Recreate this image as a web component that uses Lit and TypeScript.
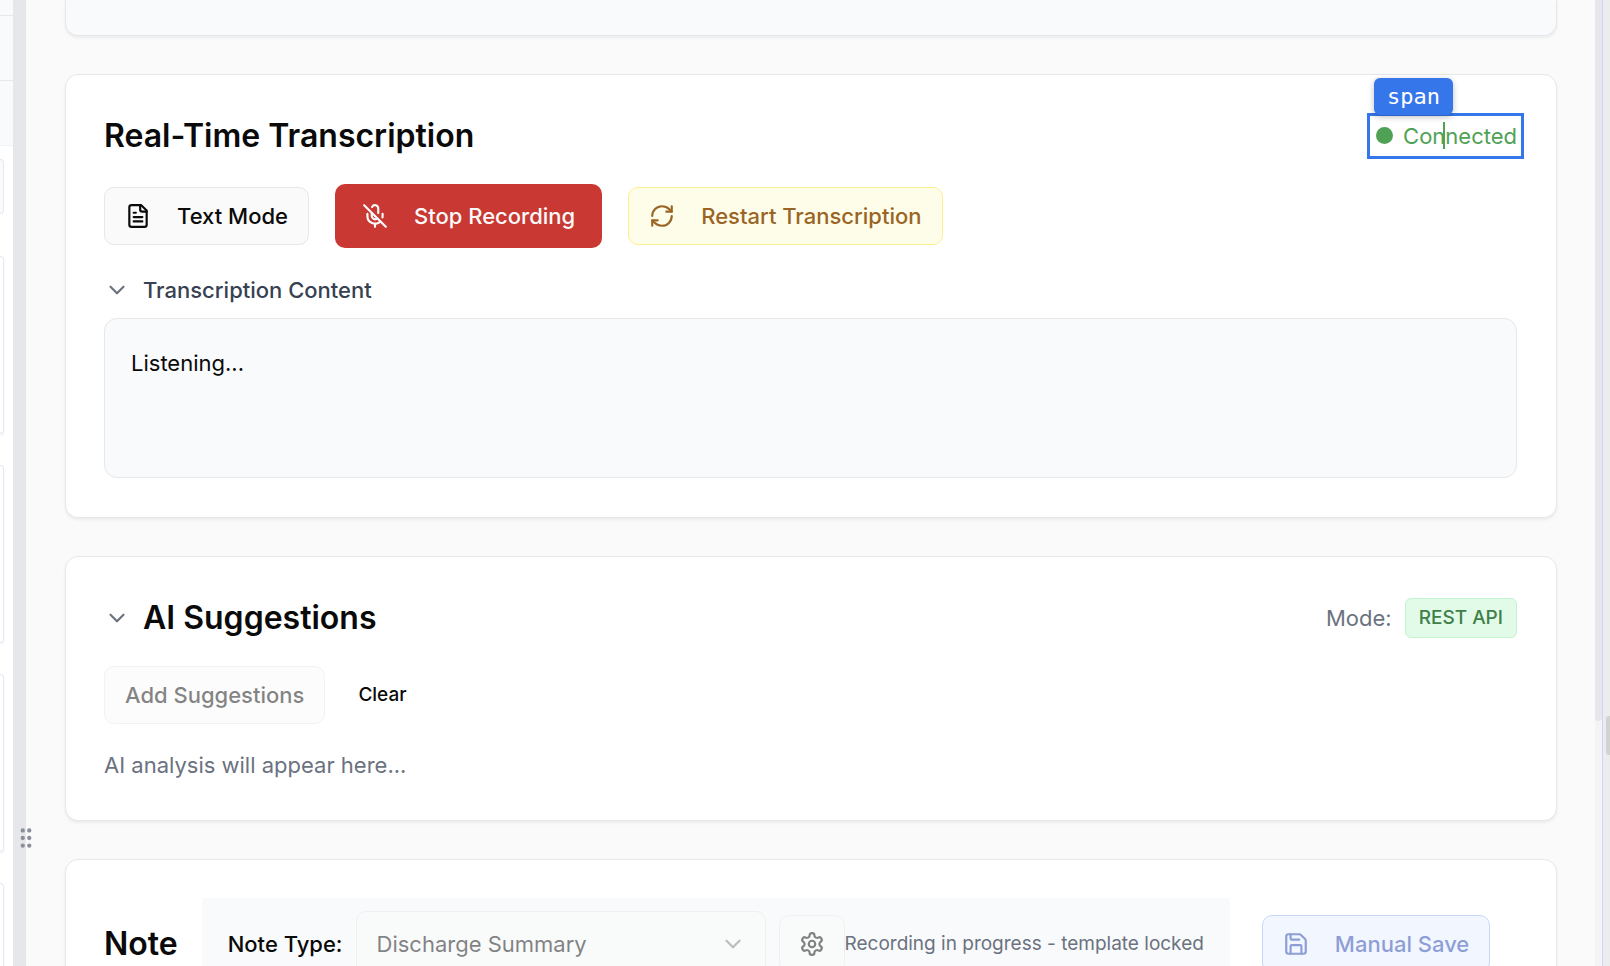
import { LitElement, html, css, svg } from "lit";
import { customElement } from "lit/decorators.js";

const glyph = (body: unknown, cls = "icon") => html`<svg class=${cls} viewBox="0 0 24 24" aria-hidden="true">${body}</svg>`;

const fileText = svg`<path d="M15 2H6a2 2 0 0 0-2 2v16a2 2 0 0 0 2 2h12a2 2 0 0 0 2-2V7Z"/><path d="M14 2v4a2 2 0 0 0 2 2h4"/><path d="M10 9H8"/><path d="M16 13H8"/><path d="M16 17H8"/>`;
const micOff = svg`<line x1="2" x2="22" y1="2" y2="22"/><path d="M18.89 13.23A7.12 7.12 0 0 0 19 12v-2"/><path d="M5 10v2a7 7 0 0 0 12 5"/><path d="M15 9.34V5a3 3 0 0 0-5.68-1.33"/><path d="M9 9v3a3 3 0 0 0 5.12 2.12"/><line x1="12" x2="12" y1="19" y2="22"/>`;
const refresh = svg`<path d="M3 12a9 9 0 0 1 9-9 9.75 9.75 0 0 1 6.74 2.74L21 8"/><path d="M21 3v5h-5"/><path d="M21 12a9 9 0 0 1-9 9 9.75 9.75 0 0 1-6.74-2.74L3 16"/><path d="M8 16H3v5"/>`;
const chevron = svg`<path d="m6 9 6 6 6-6"/>`;
const save = svg`<path d="M15.2 3a2 2 0 0 1 1.4.6l3.8 3.8a2 2 0 0 1 .6 1.4V19a2 2 0 0 1-2 2H5a2 2 0 0 1-2-2V5a2 2 0 0 1 2-2z"/><path d="M17 21v-7a1 1 0 0 0-1-1H8a1 1 0 0 0-1 1v7"/><path d="M7 3v4a1 1 0 0 0 1 1h7"/>`;
const gear = svg`<path d="M12.22 2h-.44a2 2 0 0 0-2 2v.18a2 2 0 0 1-1 1.73l-.43.25a2 2 0 0 1-2 0l-.15-.08a2 2 0 0 0-2.73.73l-.22.38a2 2 0 0 0 .73 2.73l.15.1a2 2 0 0 1 1 1.72v.51a2 2 0 0 1-1 1.74l-.15.09a2 2 0 0 0-.73 2.73l.22.38a2 2 0 0 0 2.73.73l.15-.08a2 2 0 0 1 2 0l.43.25a2 2 0 0 1 1 1.73V20a2 2 0 0 0 2 2h.44a2 2 0 0 0 2-2v-.18a2 2 0 0 1 1-1.73l.43-.25a2 2 0 0 1 2 0l.15.08a2 2 0 0 0 2.73-.73l.22-.39a2 2 0 0 0-.73-2.73l-.15-.08a2 2 0 0 1-1-1.74v-.5a2 2 0 0 1 1-1.74l.15-.09a2 2 0 0 0 .73-2.73l-.22-.38a2 2 0 0 0-2.73-.73l-.15.08a2 2 0 0 1-2 0l-.43-.25a2 2 0 0 1-1-1.73V4a2 2 0 0 0-2-2z"/><circle cx="12" cy="12" r="3"/>`;
const grip = svg`<circle cx="9" cy="12" r="1"/><circle cx="9" cy="5" r="1"/><circle cx="9" cy="19" r="1"/><circle cx="15" cy="12" r="1"/><circle cx="15" cy="5" r="1"/><circle cx="15" cy="19" r="1"/>`;

@customElement("app-root")
export class AppRoot extends LitElement {
  static styles = css`
    :host {
      display: block;
      font-family: Inter, "Liberation Sans", sans-serif;
      font-size: 22px;
      line-height: 32px;
      color: #0a0a0a;
    }
    * { box-sizing: border-box; }
    button, select { font: inherit; color: inherit; margin: 0; }
    h2, p { margin: 0; }
    .icon {
      display: block;
      flex: none;
      width: 26px;
      height: 26px;
      fill: none;
      stroke: currentColor;
      stroke-width: 2;
      stroke-linecap: round;
      stroke-linejoin: round;
    }
    .app {
      display: grid;
      grid-template-columns: 13px 13px minmax(0, 1fr) 7px 8px;
      height: 100vh;
      overflow: hidden;
      background: #fafafa;
    }
    .side {
      display: flex;
      flex-direction: column;
      overflow: hidden;
      background: #fff;
    }
    .cell {
      flex: none;
      height: 65px;
      background: #f9fafb;
      border-bottom: 1px solid #e5e7eb;
    }
    .cell.first { height: 16px; }
    .cell.last { border-color: #f1f2f4; }
    .field, .item {
      flex: none;
      width: 4px;
      border: 1px solid #e5e7eb;
      border-left: 0;
    }
    .field {
      height: 55px;
      margin: 13px 0 42px;
      background: #fafafa;
      border-radius: 0 10px 10px 0;
    }
    .item {
      height: 178px;
      margin-bottom: 31px;
      background: #fff;
      border-radius: 0 13px 13px 0;
      box-shadow: 0 2px 3px rgba(0, 0, 0, 0.05);
    }
    .divider {
      display: flex;
      align-items: flex-end;
      padding: 0 0 115px;
      background: #e5e7eb;
      color: #8b8f9b;
      z-index: 1;
    }
    .main {
      display: flex;
      flex-direction: column;
      gap: 38px;
      padding: 0 38px 0 39px;
      overflow: hidden;
    }
    .card {
      flex: none;
      padding: 38px 39px 39px 38px;
      background: #fff;
      border: 1px solid #e5e7eb;
      border-radius: 13px;
      box-shadow: 0 2px 3px rgba(0, 0, 0, 0.06);
    }
    .card.previous {
      height: 36px;
      padding: 0;
      background: #f9fafb;
      border-top: 0;
      border-radius: 0 0 13px 13px;
    }
    .head {
      display: flex;
      align-items: center;
      justify-content: space-between;
      height: 45px;
    }
    .title {
      font-size: 32px;
      line-height: 44px;
      font-weight: 600;
    }
    .fold {
      display: flex;
      align-items: center;
      gap: 13px;
      padding: 0;
      border: 0;
      background: none;
      color: #374151;
      font-weight: 500;
    }
    .fold .icon { color: #6b7280; }
    .fold .title { color: #0a0a0a; }
    .row { display: flex; align-items: center; }
    .tools { gap: 26px; margin: 26px 0; }
    .btn {
      display: flex;
      align-items: center;
      justify-content: center;
      gap: 26px;
      height: 58px;
      padding: 0 20px;
      border: 1px solid #e5e7eb;
      border-radius: 10px;
      background: #fafafa;
      font-weight: 500;
      white-space: nowrap;
    }
    .btn.stop {
      height: 64px;
      padding: 0 27px;
      border: 0;
      background: #c93832;
      color: #fafafa;
    }
    .btn.restart { background: #fefdea; border-color: #fdef8e; color: #9a6524; }
    .btn.save { margin-left: 8px; background: #e5efff; border-color: #93b3f7; color: #1e40af; }
    .btn:disabled { opacity: 0.5; }
    .btn.square { width: 66px; padding: 0; }
    .btn.plain {
      border: 0;
      background: none;
      font-size: 19px;
    }
    .transcript {
      height: 160px;
      margin-top: 12px;
      padding: 28px 26px;
      background: #f9fafb;
      border: 1px solid #e5e7eb;
      border-radius: 13px;
    }
    .status {
      position: relative;
      display: flex;
      align-items: center;
      gap: 10px;
      color: #4fa255;
    }
    .dot {
      width: 17px;
      height: 17px;
      border-radius: 50%;
      background: #4fa255;
    }
    .inspect {
      position: absolute;
      inset: -7px -7px -7px -9px;
      border: 3px solid #3577ea;
    }
    .tag {
      position: absolute;
      left: -2px;
      bottom: 37px;
      height: 37px;
      padding: 0 13px;
      border-radius: 6px;
      background: #3577ea;
      box-shadow: 0 2px 6px rgba(0, 0, 0, 0.25);
      color: #fff;
      font: 22px/37px "DejaVu Sans Mono", monospace;
    }
    .caret {
      position: absolute;
      left: 67px;
      top: 2px;
      width: 2px;
      height: 27px;
      background: #4fa255;
    }
    .mode { gap: 13px; color: #6b7280; }
    .chip {
      height: 40px;
      padding: 0 13px;
      border: 1px solid #c3f5d1;
      border-radius: 6px;
      background: #e2fae8;
      color: #3f8049;
      font-size: 19px;
      line-height: 38px;
      font-weight: 500;
    }
    .actions { gap: 13px; margin: 26px 0 25px; }
    .muted { color: #6b7280; }
    .note { gap: 24px; }
    .panel {
      display: flex;
      align-items: center;
      padding: 13px 26px;
      background: #f9fafb;
    }
    .panel label { font-weight: 500; margin-right: 13px; white-space: nowrap; }
    .pick {
      display: grid;
      align-items: center;
      width: 410px;
      margin-right: 13px;
      opacity: 0.5;
    }
    .pick select {
      grid-area: 1 / 1;
      width: 100%;
      height: 65px;
      padding: 0 20px;
      appearance: none;
      border: 1px solid #e5e7eb;
      border-radius: 10px;
      background: #fafafa;
      opacity: 1;
    }
    .pick .icon {
      grid-area: 1 / 1;
      justify-self: end;
      margin-right: 20px;
      opacity: 0.5;
      pointer-events: none;
    }
    .small { font-size: 19px; white-space: nowrap; }
    .track { background: #f3f4f6; }
    .thumb { height: 721px; background: #e5e7eb; border-radius: 0 0 4px 4px; }
    .rail {
      display: flex;
      justify-content: flex-end;
      align-items: flex-start;
      padding-top: 716px;
      border-left: 1px solid #d4d0fb;
      background: #ebecee;
    }
    .knob {
      width: 4px;
      height: 39px;
      border-radius: 3px 0 0 3px;
      background: #d1d3d3;
    }
  `;

  render() {
    return html`
      <div class="app">
        <aside class="side">
          <div class="cell first"></div>
          <div class="cell"></div>
          <div class="cell last"></div>
          <div class="field"></div>
          ${[0, 1, 2, 3].map(() => html`<div class="item"></div>`)}
        </aside>
        <div class="divider">${glyph(grip)}</div>
        <main class="main">
          <section class="card previous"></section>

          <section class="card">
            <div class="head">
              <h2 class="title">Real-Time Transcription</h2>
              <span class="status">
                <span class="dot"></span>Connected
                <span class="caret"></span>
                <span class="inspect"></span>
                <span class="tag">span</span>
              </span>
            </div>
            <div class="row tools">
              <button class="btn">${glyph(fileText)}Text Mode</button>
              <button class="btn stop">${glyph(micOff)}Stop Recording</button>
              <button class="btn restart">${glyph(refresh)}Restart Transcription</button>
            </div>
            <button class="fold" aria-expanded="true">${glyph(chevron)}Transcription Content</button>
            <div class="transcript">Listening...</div>
          </section>

          <section class="card">
            <div class="head">
              <button class="fold" aria-expanded="true">${glyph(chevron)}<span class="title">AI Suggestions</span></button>
              <div class="row mode">Mode:<span class="chip">REST API</span></div>
            </div>
            <div class="row actions">
              <button class="btn" disabled>Add Suggestions</button>
              <button class="btn plain">Clear</button>
            </div>
            <p class="muted">AI analysis will appear here...</p>
          </section>

          <section class="card">
            <div class="row note">
              <h2 class="title">Note</h2>
              <div class="panel">
                <label for="note-type">Note Type:</label>
                <div class="pick">
                  <select id="note-type" disabled><option>Discharge Summary</option></select>
                  ${glyph(chevron)}
                </div>
                <button class="btn square" disabled aria-label="Template settings">${glyph(gear)}</button>
                <span class="muted small">Recording in progress - template locked</span>
              </div>
              <button class="btn save" disabled>${glyph(save)}Manual Save</button>
            </div>
          </section>
        </main>
        <div class="track"><div class="thumb"></div></div>
        <div class="rail"><div class="knob"></div></div>
      </div>
    `;
  }
}
